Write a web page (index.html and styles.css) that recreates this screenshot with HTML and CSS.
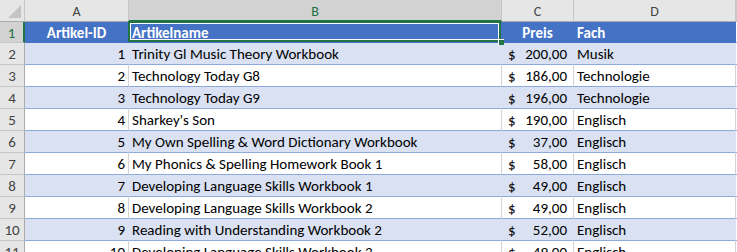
FILE: index.html
```html
<!DOCTYPE html>
<html>

<head>
    <title>Artikel</title>
    <meta charset="UTF-8">
    <link rel="stylesheet" href="styles.css">
</head>

<body>
    <div id="sheet">
        <!-- column headers -->
        <div class="colhead corner"><span class="tri"></span></div>
        <div class="colhead">A</div>
        <div class="colhead sel">B</div>
        <div class="colhead">C</div>
        <div class="colhead">D</div>
        <div class="colhead edge"></div>

        <!-- row 1: table header -->
        <div class="rowhead sel">1</div>
        <div class="cell th center">Artikel-ID</div>
        <div class="cell th active">Artikelname</div>
        <div class="cell th center">Preis</div>
        <div class="cell th">Fach</div>
        <div class="cell edge"></div>

        <div class="rowhead">2</div>
        <div class="cell band num">1</div>
        <div class="cell band">Trinity Gl Music Theory Workbook</div>
        <div class="cell band money"><span>$</span><span>200,00</span></div>
        <div class="cell band">Musik</div>
        <div class="cell edge"></div>

        <div class="rowhead">3</div>
        <div class="cell num">2</div>
        <div class="cell">Technology Today G8</div>
        <div class="cell money"><span>$</span><span>186,00</span></div>
        <div class="cell">Technologie</div>
        <div class="cell edge"></div>

        <div class="rowhead">4</div>
        <div class="cell band num">3</div>
        <div class="cell band">Technology Today G9</div>
        <div class="cell band money"><span>$</span><span>196,00</span></div>
        <div class="cell band">Technologie</div>
        <div class="cell edge"></div>

        <div class="rowhead">5</div>
        <div class="cell num">4</div>
        <div class="cell">Sharkey's Son</div>
        <div class="cell money"><span>$</span><span>190,00</span></div>
        <div class="cell">Englisch</div>
        <div class="cell edge"></div>

        <div class="rowhead">6</div>
        <div class="cell band num">5</div>
        <div class="cell band">My Own Spelling &amp; Word Dictionary Workbook</div>
        <div class="cell band money"><span>$</span><span>37,00</span></div>
        <div class="cell band">Englisch</div>
        <div class="cell edge"></div>

        <div class="rowhead">7</div>
        <div class="cell num">6</div>
        <div class="cell">My Phonics &amp; Spelling Homework Book 1</div>
        <div class="cell money"><span>$</span><span>58,00</span></div>
        <div class="cell">Englisch</div>
        <div class="cell edge"></div>

        <div class="rowhead">8</div>
        <div class="cell band num">7</div>
        <div class="cell band">Developing Language Skills Workbook 1</div>
        <div class="cell band money"><span>$</span><span>49,00</span></div>
        <div class="cell band">Englisch</div>
        <div class="cell edge"></div>

        <div class="rowhead">9</div>
        <div class="cell num">8</div>
        <div class="cell">Developing Language Skills Workbook 2</div>
        <div class="cell money"><span>$</span><span>49,00</span></div>
        <div class="cell">Englisch</div>
        <div class="cell edge"></div>

        <div class="rowhead">10</div>
        <div class="cell band num">9</div>
        <div class="cell band">Reading with Understanding Workbook 2</div>
        <div class="cell band money"><span>$</span><span>52,00</span></div>
        <div class="cell band">Englisch</div>
        <div class="cell edge"></div>

        <div class="rowhead">11</div>
        <div class="cell num">10</div>
        <div class="cell">Developing Language Skills Workbook 3</div>
        <div class="cell money"><span>$</span><span>49,00</span></div>
        <div class="cell">Englisch</div>
        <div class="cell edge"></div>
    </div>
</body>

</html>
```

FILE: styles.css
```css
body {
    margin: 0;
    background: #fff;
    overflow: hidden;
}
#sheet {
    display: grid;
    grid-template-columns: 25px 104px 373px 72px 162px 1px;
    grid-template-rows: 22px 21px repeat(10, 22px);
    font-family: Carlito, "Open Sans", sans-serif;
    font-size: 15px;
    color: #000;
}
#sheet > div {
    box-sizing: border-box;
    white-space: nowrap;
    overflow: hidden;
}
.colhead {
    background: #e6e6e6;
    color: #444;
    border-right: 1px solid #c6c6c6;
    border-bottom: 1px solid #ababab;
    text-align: center;
    line-height: 24px;
    font-size: 14px;
}
.colhead.sel {
    background: #d2d2d2;
    color: #217346;
    border-bottom: 2px solid #217346;
}
.corner {
    position: relative;
}
.tri {
    position: absolute;
    right: 3px;
    bottom: 3px;
    width: 13px;
    height: 13px;
    background: #c4c4c4;
    clip-path: polygon(100% 0, 100% 100%, 0 100%);
}
.rowhead {
    background: #e6e6e6;
    color: #444;
    border-right: 1px solid #ababab;
    border-bottom: 1px solid #c6c6c6;
    text-align: center;
    line-height: 23px;
}
.rowhead.sel {
    background: #d2d2d2;
    color: #217346;
    border-right: 2px solid #217346;
}
.cell {
    background: #fff;
    border-right: 1px solid #d4d4d4;
    border-bottom: 1px solid #8ea9db;
    padding: 0 3px;
    line-height: 23px;
}
.cell.band {
    background: #d9e1f2;
    border-right-color: #d9e1f2;
}
.cell.th {
    background: #4472c4;
    border-right-color: #4472c4;
    border-bottom-color: #4472c4;
    color: #fff;
    font-weight: bold;
}
.cell.edge {
    padding: 0;
    border-right: 0;
}
.center {
    text-align: center;
}
.num {
    text-align: right;
}
.money {
    display: flex;
    justify-content: space-between;
    padding: 0 6px 0 6px;
}
.active {
    position: relative;
    overflow: visible !important;
}
.active::after {
    content: "";
    position: absolute;
    left: -1px;
    top: -1px;
    right: 0;
    bottom: 0;
    border: 2px solid #217346;
    box-shadow: inset 0 0 0 1px #fff;
    z-index: 2;
}
.active::before {
    content: "";
    position: absolute;
    right: -3px;
    bottom: -3px;
    width: 5px;
    height: 5px;
    background: #217346;
    border: 1px solid #fff;
    border-width: 1px 0 0 1px;
    z-index: 3;
}
```
